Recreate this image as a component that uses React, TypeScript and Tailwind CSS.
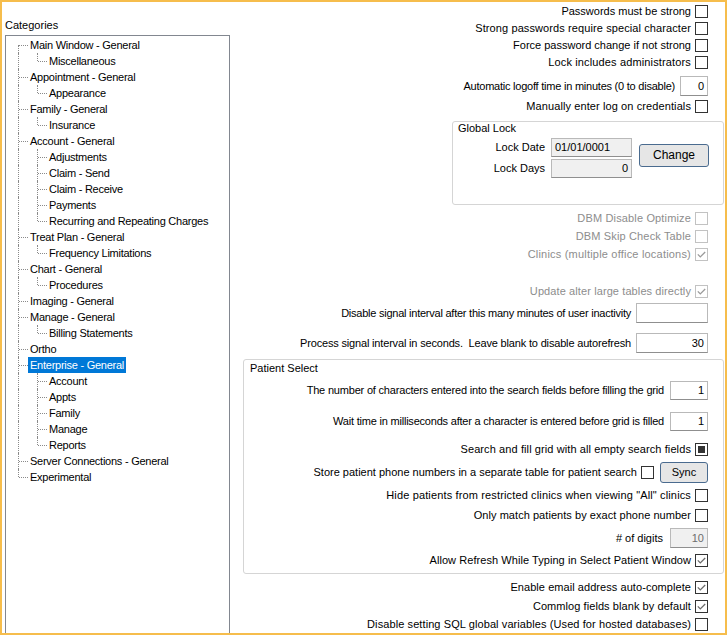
import clsx from 'clsx';
import type { ReactNode } from 'react';

interface TreeNode {
  label: string;
  children: string[];
  selected?: boolean;
}

const tree: TreeNode[] = [
  { label: 'Main Window - General', children: ['Miscellaneous'] },
  { label: 'Appointment - General', children: ['Appearance'] },
  { label: 'Family - General', children: ['Insurance'] },
  {
    label: 'Account - General',
    children: ['Adjustments', 'Claim - Send', 'Claim - Receive', 'Payments', 'Recurring and Repeating Charges'],
  },
  { label: 'Treat Plan - General', children: ['Frequency Limitations'] },
  { label: 'Chart - General', children: ['Procedures'] },
  { label: 'Imaging - General', children: [] },
  { label: 'Manage - General', children: ['Billing Statements'] },
  { label: 'Ortho', children: [] },
  { label: 'Enterprise - General', children: ['Account', 'Appts', 'Family', 'Manage', 'Reports'], selected: true },
  { label: 'Server Connections - General', children: [] },
  { label: 'Experimental', children: [] },
];

const dot = 'absolute w-0 border-l border-dotted border-[#8a8a8a]';
const hdot = 'absolute top-[8px] h-0 w-[9px] border-t border-dotted border-[#8a8a8a]';

function CategoryTree() {
  return (
    <div className="mt-[3px] h-[620px] w-[225px] border border-[#828790] bg-white pt-[1px] tracking-[-0.25px]">
      {tree.map((node, i) => {
        const first = i === 0;
        const last = i === tree.length - 1;
        return (
          <div key={node.label}>
            {/* top level row */}
            <div className="relative flex h-[16px] items-center">
              <span className={clsx(dot, 'left-[12px]', first ? 'top-[8px] bottom-0' : last ? 'top-0 h-[8px]' : 'top-0 bottom-0')} />
              <span className={clsx(hdot, 'left-[13px]')} />
              <span
                className={clsx(
                  'ml-[22px] flex h-[16px] items-center px-[2px] whitespace-nowrap',
                  node.selected ? 'bg-[#0078d7] text-white' : 'text-black',
                )}
              >
                {node.label}
              </span>
            </div>
            {node.children.map((child, j) => {
              const lastChild = j === node.children.length - 1;
              return (
                <div key={child} className="relative flex h-[16px] items-center">
                  {!last && <span className={clsx(dot, 'left-[12px] top-0 bottom-0')} />}
                  <span className={clsx(dot, 'left-[31px]', lastChild ? 'top-0 h-[8px]' : 'top-0 bottom-0')} />
                  <span className={clsx(hdot, 'left-[32px]')} />
                  <span className="ml-[41px] px-[2px] whitespace-nowrap text-black">{child}</span>
                </div>
              );
            })}
          </div>
        );
      })}
    </div>
  );
}

function Check({ checked = false, mixed = false, disabled = false }: { checked?: boolean; mixed?: boolean; disabled?: boolean }) {
  return (
    <span
      className={clsx(
        'relative block h-[13px] w-[13px] shrink-0 border bg-white',
        disabled ? 'border-[#c2c2c2]' : 'border-[#333333]',
      )}
    >
      {checked && (
        <svg className="absolute inset-0" width="11" height="11" viewBox="0 0 11 11">
          <path
            d="M1.8 5.4 L4.3 7.9 L9.2 3"
            fill="none"
            stroke={disabled ? '#9a9a9a' : '#6b6b6b'}
            strokeWidth="1.3"
          />
        </svg>
      )}
      {mixed && <span className="absolute inset-[2px] bg-[#333333]" />}
    </span>
  );
}

function Field({
  value = '',
  className,
  left = false,
  disabled = false,
  dim = false,
}: {
  value?: string;
  className: string;
  left?: boolean;
  disabled?: boolean;
  dim?: boolean;
}) {
  return (
    <span
      className={clsx(
        'flex shrink-0 items-center border border-[#b9b9b9] border-b-[#8f8f8f] px-[3px]',
        left ? 'justify-start' : 'justify-end',
        disabled ? 'bg-[#f0f0f0]' : 'bg-white',
        dim ? 'text-[#6d6d6d]' : 'text-black',
        className,
      )}
    >
      {value}
    </span>
  );
}

function Btn({ children, className }: { children: ReactNode; className: string }) {
  return (
    <span
      className={clsx(
        'flex shrink-0 items-center justify-center rounded-[3px] border border-[#4a6b8f] bg-[#e6e6e6] text-black',
        className,
      )}
    >
      {children}
    </span>
  );
}

function CheckRow({
  label,
  checked,
  mixed,
  disabled,
  className,
  track,
}: {
  label: string;
  checked?: boolean;
  mixed?: boolean;
  disabled?: boolean;
  className: string;
  track?: string;
}) {
  return (
    <div className={clsx('flex items-center justify-end gap-[4px]', className)}>
      <span className={clsx('whitespace-nowrap', track, disabled ? 'text-[#8d8d8d]' : 'text-black')}>{label}</span>
      <Check checked={checked} mixed={mixed} disabled={disabled} />
    </div>
  );
}

export default function App() {
  return (
    <div className="w-[728px] bg-white">
      <div className="flex h-[635px] w-[727px] overflow-hidden border-2 border-[#f6bd4c] bg-white font-['Liberation_Sans',Arial,sans-serif] text-[11px] leading-[13px]">
        {/* Left: categories */}
        <div className="shrink-0 pl-[3px]">
          <div className="mt-[17px] h-[13px] text-black">Categories</div>
          <CategoryTree />
        </div>

        {/* Right: settings */}
        <div className="ml-[13px] flex w-[481px] shrink-0 flex-col pt-[1px]">
          <CheckRow label="Passwords must be strong" className="h-[17px] pr-[16px]" />
          <CheckRow label="Strong passwords require special character" track="tracking-[0.1px]" className="h-[17px] pr-[16px]" />
          <CheckRow label="Force password change if not strong" className="h-[17px] pr-[16px]" />
          <CheckRow label="Lock includes administrators" track="tracking-[0.14px]" className="h-[17px] pr-[16px]" />

          <div className="mt-[5px] flex h-[20px] items-center justify-end gap-[5px] pr-[16px]">
            <span className="whitespace-nowrap tracking-[-0.23px]">Automatic logoff time in minutes (0 to disable)</span>
            <Field value="0" className="h-[20px] w-[28px]" />
          </div>

          <CheckRow label="Manually enter log on credentials" track="tracking-[0.1px]" className="mt-[2px] h-[17px] pr-[16px]" />

          {/* Global Lock */}
          <div className="mt-[6px] ml-auto h-[84px] w-[272px] rounded-[3px] border border-[#d5d5d5]">
            <div className="h-[12px] pl-[5px] leading-[12px]">Global Lock</div>
            <div className="mt-[4px] flex items-start justify-end gap-[7px] pr-[14px]">
              <div className="flex flex-col gap-[2px]">
                <div className="flex h-[19px] items-center justify-end gap-[6px]">
                  <span>Lock Date</span>
                  <Field value="01/01/0001" left disabled className="h-[19px] w-[81px]" />
                </div>
                <div className="flex h-[19px] items-center justify-end gap-[6px]">
                  <span>Lock Days</span>
                  <Field value="0" disabled className="h-[19px] w-[81px]" />
                </div>
              </div>
              <Btn className="mt-[6px] h-[23px] w-[70px] text-[12px]">Change</Btn>
            </div>
          </div>

          <CheckRow label="DBM Disable Optimize" disabled track="tracking-[0.15px]" className="mt-[4px] h-[18px] pr-[16px]" />
          <CheckRow label="DBM Skip Check Table" disabled track="tracking-[0.15px]" className="h-[18px] pr-[16px]" />
          <CheckRow label="Clinics (multiple office locations)" checked disabled track="tracking-[0.2px]" className="h-[18px] pr-[16px]" />
          <CheckRow label="Update alter large tables directly" checked disabled track="tracking-[0.1px]" className="mt-[19px] h-[18px] pr-[16px]" />

          <div className="mt-[3px] flex h-[20px] items-center justify-end gap-[5px] pr-[16px]">
            <span className="whitespace-nowrap tracking-[-0.24px]">Disable signal interval after this many minutes of user inactivity</span>
            <Field className="h-[20px] w-[72px]" />
          </div>
          <div className="mt-[10px] flex h-[20px] items-center justify-end gap-[5px] pr-[16px]">
            <span className="whitespace-pre tracking-[-0.17px]">Process signal interval in seconds.  Leave blank to disable autorefresh</span>
            <Field value="30" className="h-[20px] w-[72px]" />
          </div>

          {/* Patient Select */}
          <div className="mt-[6px] h-[215px] w-[481px] rounded-[3px] border border-[#d5d5d5]">
            <div className="box-content h-[13px] pt-[2px] pl-[6px]">Patient Select</div>
            <div className="mt-[6px] flex h-[19px] items-center justify-end gap-[6px] pr-[15px]">
              <span className="whitespace-nowrap tracking-[-0.19px]">The number of characters entered into the search fields before filling the grid</span>
              <Field value="1" className="h-[19px] w-[38px]" />
            </div>
            <div className="mt-[12px] flex h-[19px] items-center justify-end gap-[6px] pr-[15px]">
              <span className="whitespace-nowrap tracking-[-0.21px]">Wait time in milliseconds after a character is entered before grid is filled</span>
              <Field value="1" className="h-[19px] w-[38px]" />
            </div>
            <CheckRow label="Search and fill grid with all empty search fields" mixed track="tracking-[0.1px]" className="mt-[10px] h-[16px] pr-[15px]" />
            <div className="mt-[5px] flex h-[21px] items-center justify-end pr-[15px]">
              <span className="mr-[4px] whitespace-nowrap">Store patient phone numbers in a separate table for patient search</span>
              <Check />
              <Btn className="ml-[6px] h-[21px] w-[48px]">Sync</Btn>
            </div>
            <CheckRow label='Hide patients from restricted clinics when viewing "All" clinics' track="tracking-[0.14px]" className="mt-[3px] h-[18px] pr-[15px]" />
            <CheckRow label="Only match patients by exact phone number" track="tracking-[0.05px]" className="mt-[2px] h-[18px] pr-[15px]" />
            <div className="mt-[4px] flex h-[20px] items-center justify-end gap-[7px] pr-[15px]">
              <span># of digits</span>
              <Field value="10" disabled dim className="h-[20px] w-[38px]" />
            </div>
            <CheckRow label="Allow Refresh While Typing in Select Patient Window" checked track="tracking-[0.06px]" className="mt-[3px] h-[18px] pr-[15px]" />
          </div>

          <CheckRow label="Enable email address auto-complete" checked track="tracking-[0.06px]" className="mt-[4px] h-[18px] pr-[16px]" />
          <CheckRow label="Commlog fields blank by default" checked track="tracking-[0.07px]" className="mt-[1px] h-[18px] pr-[16px]" />
          <CheckRow label="Disable setting SQL global variables (Used for hosted databases)" track="tracking-[0.09px]" className="h-[18px] pr-[16px]" />
        </div>
      </div>
    </div>
  );
}
